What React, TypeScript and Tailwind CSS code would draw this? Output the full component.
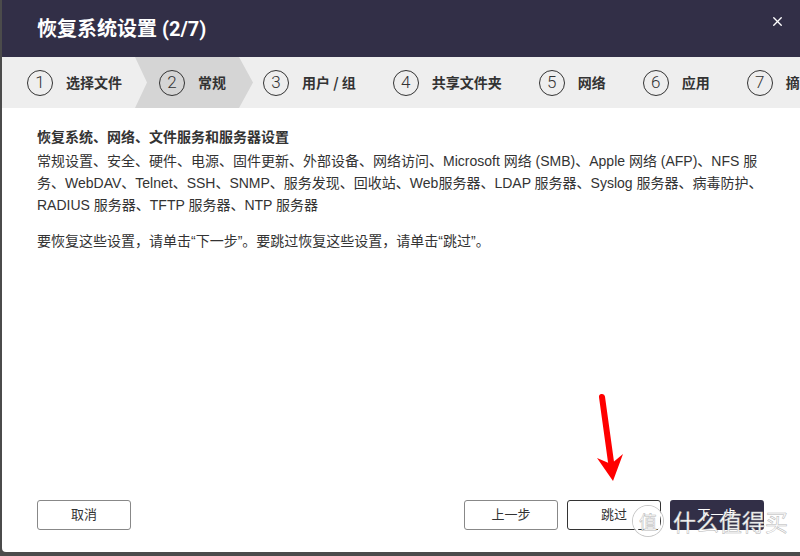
import { X } from 'lucide-react'

const steps = [
  { n: 1, label: '选择文件' },
  { n: 2, label: '常规', active: true },
  { n: 3, label: '用户 / 组' },
  { n: 4, label: '共享文件夹' },
  { n: 5, label: '网络' },
  { n: 6, label: '应用' },
  { n: 7, label: '摘要' },
]

function Step({ n, label, active }: { n: number; label: string; active?: boolean }) {
  return (
    <div
      className={
        active
          ? 'flex items-center shrink-0 h-full pl-[24px] pr-[27px] -mr-[14px] bg-[#d5d5d5] [clip-path:polygon(0_0,calc(100%_-_14px)_0,100%_50%,calc(100%_-_14px)_100%,0_100%,12px_50%)]'
          : 'flex items-center shrink-0 h-full pl-[24px] pr-[13px]'
      }
    >
      <span className="w-[26px] h-[26px] rounded-full border-[1.5px] border-[#333] flex items-center justify-center text-[17px] font-light text-[#333] font-['Roboto',sans-serif] leading-none">
        {n}
      </span>
      <span className="ml-[13px] text-[14px] font-bold text-[#333] whitespace-nowrap">{label}</span>
    </div>
  )
}

export default function App() {
  return (
    <div className="relative w-[800px] h-[556px] overflow-hidden bg-[#4b4b4b] font-['Liberation_Sans','Noto_Sans_CJK_SC',sans-serif]">
      <div className="ml-[2px] h-[552px] bg-white rounded-bl-[4px] flex flex-col">
        {/* header */}
        <div className="h-[57px] bg-[#322f47] flex items-center justify-between pl-[35px] pr-[15px]">
          <h1 className="text-white text-[20px] font-bold font-['Roboto','Noto_Sans_CJK_SC',sans-serif]">
            恢复系统设置 (2/7)
          </h1>
          <X className="text-white -mt-[14px]" size={15} strokeWidth={2.2} />
        </div>

        {/* steps */}
        <div className="h-[51px] bg-[#eeeeee] flex overflow-hidden pl-[1px] font-['Noto_Sans_CJK_SC',sans-serif]">
          {steps.map((s) => (
            <Step key={s.n} {...s} />
          ))}
        </div>

        {/* body */}
        <div className="flex-1 px-[35px] pt-[18px] text-[14px] leading-[22px] text-[#333]">
          <div className="font-bold">恢复系统、网络、文件服务和服务器设置</div>
          <div className="mt-[2px] whitespace-nowrap">
            常规设置、安全、硬件、电源、固件更新、外部设备、网络访问、Microsoft 网络 (SMB)、Apple 网络 (AFP)、NFS 服
            <br />
            务、WebDAV、Telnet、SSH、SNMP、服务发现、回收站、Web服务器、LDAP 服务器、Syslog 服务器、病毒防护、
            <br />
            RADIUS 服务器、TFTP 服务器、NTP 服务器
          </div>
          <p className="mt-[14px]">要恢复这些设置，请单击“下一步”。要跳过恢复这些设置，请单击“跳过”。</p>
        </div>

        {/* footer */}
        <div className="flex justify-between items-center pl-[35px] pr-[36px] pb-[22px] text-[13px]">
          <button className="w-[94px] h-[30px] rounded-[3px] border border-[#888] text-[#333] bg-white">取消</button>
          <div className="flex gap-[9px]">
            <button className="w-[94px] h-[30px] rounded-[3px] border border-[#888] text-[#333] bg-white">上一步</button>
            <button className="w-[94px] h-[30px] rounded-[3px] border border-[#333] text-[#333] bg-white">跳过</button>
            <button className="w-[94px] h-[30px] rounded-[3px] bg-[#322f47] text-white">下一步</button>
          </div>
        </div>
      </div>

      {/* red annotation arrow */}
      <svg className="absolute left-0 top-0 pointer-events-none" width="800" height="556">
        <line x1="602" y1="397" x2="611" y2="462" stroke="#ff0000" strokeWidth="6" strokeLinecap="round" />
        <polygon points="597,458 611,464 623,454 613,481" fill="#ff0000" />
      </svg>

      {/* watermark */}
      <div className="absolute left-[633px] top-[506px] flex items-center gap-[10px] pointer-events-none font-['Noto_Sans_CJK_SC',sans-serif] text-white [-webkit-text-stroke:0.5px_#b5b5b5]">
        <span className="w-[30px] h-[30px] rounded-full border-2 border-white shadow-[0_0_0_1px_#c8c8c8] flex items-center justify-center text-[18px]">
          值
        </span>
        <span className="text-[23px] leading-none">什么值得买</span>
      </div>
    </div>
  )
}
